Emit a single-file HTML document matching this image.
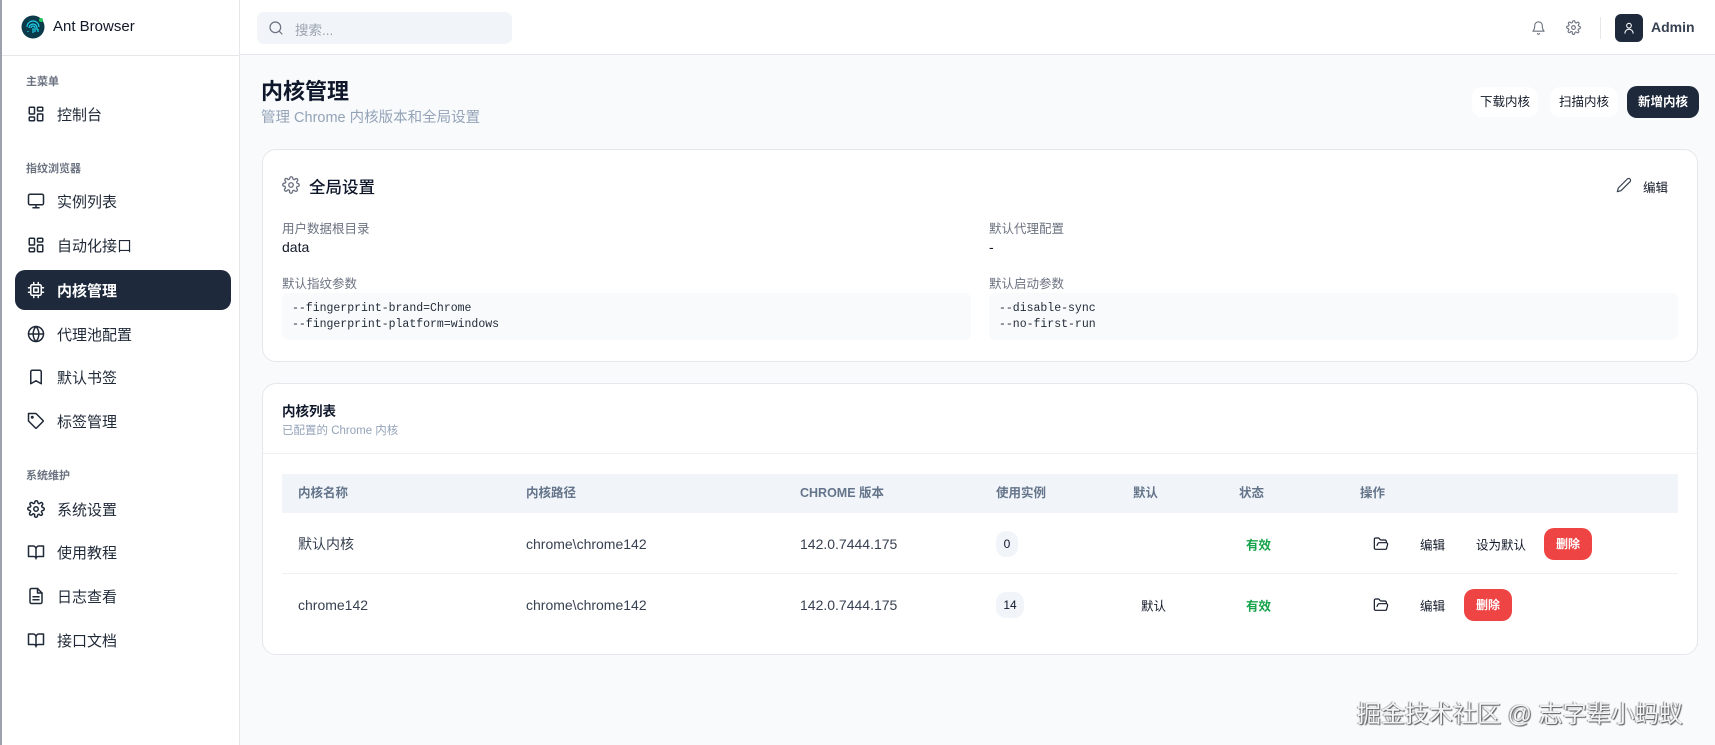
<!DOCTYPE html>
<html><head><meta charset="utf-8"><style>
*{box-sizing:border-box;margin:0;padding:0}
body{width:1715px;height:745px;overflow:hidden;font-family:"Liberation Sans","Noto Sans CJK SC",sans-serif;background:#f8fafc;color:#0f172a;position:relative;font-size:14px}
.abs{position:absolute}
.side{position:absolute;left:0;top:0;width:240px;height:745px;background:#fff;border-right:1px solid #e5e7eb;border-left:2px solid #9ca3af}
.top{position:absolute;left:240px;top:0;right:0;height:55px;background:#fff;border-bottom:1px solid #e5e7eb}
.sec{position:absolute;left:24px;font-size:11px;color:#6b7280;font-weight:bold}
.item{position:absolute;left:13px;width:216px;height:40px;display:flex;align-items:center;padding-left:12px;font-size:15px;color:#1f2937}
.item svg{width:18px;height:18px;margin-right:12px;fill:none;stroke:currentColor;stroke-width:2;stroke-linecap:round;stroke-linejoin:round}
.item.act{background:#1e293b;color:#fff;border-radius:10px;font-weight:bold}
.card{position:absolute;left:262px;width:1436px;background:#fff;border:1px solid #e5e7eb;border-radius:14px}
.lbl{position:absolute;font-size:12.5px;color:#6b7280}
.val{position:absolute;font-size:14px;color:#111827}
.code{position:absolute;background:#f8fafc;border-radius:6px;font-family:"Liberation Mono",monospace;font-size:11.5px;color:#1f2937;padding:8px 10px;line-height:16px}
.th{position:absolute;top:474px;height:39px;line-height:39px;font-size:12.5px;color:#64748b;font-weight:bold}
.td{position:absolute;font-size:14px;color:#374151;transform:translateY(-50%)}
.btnr{position:absolute;background:#ef4444;color:#fff;border-radius:10px;font-size:12px;font-weight:bold;text-align:center;line-height:32px;height:32px}
.pill{position:absolute;background:#f1f5f9;border-radius:10px;font-size:12px;text-align:center;height:26px;line-height:26px;transform:translateY(-50%)}
.ic{fill:none;stroke:currentColor;stroke-width:1.8;stroke-linecap:round;stroke-linejoin:round}
</style></head><body>
<div class="side">
 <svg class="abs" style="left:19px;top:15px" width="24" height="24" viewBox="0 0 24 24"><circle cx="12" cy="12" r="11.5" fill="#0b3a4a"/><g fill="none" stroke="#22d3ee" stroke-width="1.2"><path d="M6 12a6 6 0 0 1 12 0"/><path d="M8 13a4 4 0 0 1 8 0v2"/><path d="M10 13a2 2 0 0 1 4 0v4"/><path d="M12 13v5"/><path d="M7 16v1M17 14v3"/></g><circle cx="20" cy="5" r="2" fill="#22c55e"/></svg>
 <div class="abs" style="left:51px;top:18px;font-size:15px;font-weight:500;color:#111827">Ant Browser</div>
 <div class="abs" style="left:0;top:55px;width:238px;border-top:1px solid #e5e7eb"></div>
 <div class="sec" style="top:73px">主菜单</div>
 <div class="item" style="top:94px"><svg viewBox="0 0 24 24"><rect x="3" y="3" width="7" height="9" rx="1"/><rect x="14" y="3" width="7" height="5" rx="1"/><rect x="14" y="12" width="7" height="9" rx="1"/><rect x="3" y="16" width="7" height="5" rx="1"/></svg>控制台</div>
 <div class="sec" style="top:160px">指纹浏览器</div>
 <div class="item" style="top:181px"><svg viewBox="0 0 24 24"><rect x="2" y="3" width="20" height="14" rx="2"/><path d="M8 21h8M12 17v4"/></svg>实例列表</div>
 <div class="item" style="top:225px"><svg viewBox="0 0 24 24"><rect x="3" y="3" width="7" height="9" rx="1"/><rect x="14" y="3" width="7" height="5" rx="1"/><rect x="14" y="12" width="7" height="9" rx="1"/><rect x="3" y="16" width="7" height="5" rx="1"/></svg>自动化接口</div>
 <div class="item act" style="top:270px"><svg viewBox="0 0 24 24"><rect x="5" y="5" width="14" height="14" rx="2"/><rect x="9" y="9" width="6" height="6"/><path d="M9 2v3M15 2v3M9 19v3M15 19v3M2 9h3M2 15h3M19 9h3M19 15h3"/></svg>内核管理</div>
 <div class="item" style="top:314px"><svg viewBox="0 0 24 24"><circle cx="12" cy="12" r="10"/><path d="M2 12h20M12 2a15 15 0 0 1 0 20M12 2a15 15 0 0 0 0 20"/></svg>代理池配置</div>
 <div class="item" style="top:357px"><svg viewBox="0 0 24 24"><path d="M19 21l-7-4-7 4V5a2 2 0 0 1 2-2h10a2 2 0 0 1 2 2z"/></svg>默认书签</div>
 <div class="item" style="top:401px"><svg viewBox="0 0 24 24"><path d="M12 2H2v10l9.3 9.3a1 1 0 0 0 1.4 0l8.6-8.6a1 1 0 0 0 0-1.4z"/><circle cx="7" cy="7" r="1"/></svg>标签管理</div>
 <div class="sec" style="top:467px">系统维护</div>
 <div class="item" style="top:489px"><svg viewBox="0 0 24 24"><circle cx="12" cy="12" r="3"/><path d="M19.4 15a1.7 1.7 0 0 0 .3 1.8l.1.1a2 2 0 1 1-2.8 2.8l-.1-.1a1.7 1.7 0 0 0-2.9 1.2V21a2 2 0 1 1-4 0v-.1A1.7 1.7 0 0 0 7 19.3l-.1.1a2 2 0 1 1-2.8-2.8l.1-.1A1.7 1.7 0 0 0 3 13.6H3a2 2 0 1 1 0-4h.1A1.7 1.7 0 0 0 4.7 7l-.1-.1a2 2 0 1 1 2.8-2.8l.1.1A1.7 1.7 0 0 0 10.4 3V3a2 2 0 1 1 4 0v.1a1.7 1.7 0 0 0 2.9 1.2l.1-.1a2 2 0 1 1 2.8 2.8l-.1.1a1.7 1.7 0 0 0 1.2 2.9H21a2 2 0 1 1 0 4h-.1a1.7 1.7 0 0 0-1.5 1z"/></svg>系统设置</div>
 <div class="item" style="top:532px"><svg viewBox="0 0 24 24"><path d="M2 4h6a4 4 0 0 1 4 4v13a3 3 0 0 0-3-3H2zM22 4h-6a4 4 0 0 0-4 4v13a3 3 0 0 1 3-3h7z"/></svg>使用教程</div>
 <div class="item" style="top:576px"><svg viewBox="0 0 24 24"><path d="M14 2H6a2 2 0 0 0-2 2v16a2 2 0 0 0 2 2h12a2 2 0 0 0 2-2V8z"/><path d="M14 2v6h6M16 13H8M16 17H8"/></svg>日志查看</div>
 <div class="item" style="top:620px"><svg viewBox="0 0 24 24"><path d="M2 4h6a4 4 0 0 1 4 4v13a3 3 0 0 0-3-3H2zM22 4h-6a4 4 0 0 0-4 4v13a3 3 0 0 1 3-3h7z"/></svg>接口文档</div>
</div>
<div class="top">
 <div class="abs" style="left:17px;top:12px;width:255px;height:32px;background:#f1f5f9;border-radius:7px"></div>
 <svg class="abs ic" style="left:28px;top:20px;color:#6b7280" width="16" height="16" viewBox="0 0 24 24"><circle cx="11" cy="11" r="8"/><path d="M21 21l-4.3-4.3"/></svg>
 <div class="abs" style="left:55px;top:19px;font-size:13.5px;color:#9ca3af">搜索...</div>
 <svg class="abs ic" style="left:1291px;top:20px;color:#6b7280" width="15" height="16" viewBox="0 0 24 24"><path d="M6 8a6 6 0 0 1 12 0c0 7 3 9 3 9H3s3-2 3-9M10.3 21a1.9 1.9 0 0 0 3.4 0"/></svg>
 <svg class="abs ic" style="left:1326px;top:20px;color:#6b7280" width="15" height="15" viewBox="0 0 24 24"><circle cx="12" cy="12" r="3"/><path d="M19.4 15a1.7 1.7 0 0 0 .3 1.8l.1.1a2 2 0 1 1-2.8 2.8l-.1-.1a1.7 1.7 0 0 0-2.9 1.2V21a2 2 0 1 1-4 0v-.1A1.7 1.7 0 0 0 7 19.3l-.1.1a2 2 0 1 1-2.8-2.8l.1-.1A1.7 1.7 0 0 0 3 13.6H3a2 2 0 1 1 0-4h.1A1.7 1.7 0 0 0 4.7 7l-.1-.1a2 2 0 1 1 2.8-2.8l.1.1A1.7 1.7 0 0 0 10.4 3V3a2 2 0 1 1 4 0v.1a1.7 1.7 0 0 0 2.9 1.2l.1-.1a2 2 0 1 1 2.8 2.8l-.1.1a1.7 1.7 0 0 0 1.2 2.9H21a2 2 0 1 1 0 4h-.1a1.7 1.7 0 0 0-1.5 1z"/></svg>
 <div class="abs" style="left:1360px;top:17px;height:22px;border-left:1px solid #e5e7eb"></div>
 <div class="abs" style="left:1375px;top:14px;width:28px;height:28px;background:#1e293b;border-radius:6px"></div>
 <svg class="abs ic" style="left:1382px;top:21px;color:#fff" width="14" height="14" viewBox="0 0 24 24"><circle cx="12" cy="8" r="4"/><path d="M5 21a7 7 0 0 1 14 0"/></svg>
 <div class="abs" style="left:1411px;top:19px;font-size:14px;font-weight:bold;color:#374151">Admin</div>
</div>
<div class="abs" style="left:261px;top:74px;font-size:22px;font-weight:bold">内核管理</div>
<div class="abs" style="left:261px;top:106px;font-size:14.5px;color:#94a3b8">管理 Chrome 内核版本和全局设置</div>
<div class="abs" style="left:1472px;top:87px;width:66px;height:30px;line-height:30px;text-align:center;font-size:12.5px;background:#fff;border-radius:10px;color:#111827">下载内核</div>
<div class="abs" style="left:1550px;top:87px;width:68px;height:30px;line-height:30px;text-align:center;font-size:12.5px;background:#fff;border-radius:10px;color:#111827">扫描内核</div>
<div class="abs" style="left:1627px;top:86px;width:72px;height:32px;line-height:32px;text-align:center;font-size:12.5px;font-weight:bold;background:#1e293b;border-radius:10px;color:#fff">新增内核</div>

<div class="card" style="top:149px;height:213px"></div>
<svg class="abs ic" style="left:282px;top:176px;color:#6b7280" width="18" height="18" viewBox="0 0 24 24"><circle cx="12" cy="12" r="3"/><path d="M19.4 15a1.7 1.7 0 0 0 .3 1.8l.1.1a2 2 0 1 1-2.8 2.8l-.1-.1a1.7 1.7 0 0 0-2.9 1.2V21a2 2 0 1 1-4 0v-.1A1.7 1.7 0 0 0 7 19.3l-.1.1a2 2 0 1 1-2.8-2.8l.1-.1A1.7 1.7 0 0 0 3 13.6H3a2 2 0 1 1 0-4h.1A1.7 1.7 0 0 0 4.7 7l-.1-.1a2 2 0 1 1 2.8-2.8l.1.1A1.7 1.7 0 0 0 10.4 3V3a2 2 0 1 1 4 0v.1a1.7 1.7 0 0 0 2.9 1.2l.1-.1a2 2 0 1 1 2.8 2.8l-.1.1a1.7 1.7 0 0 0 1.2 2.9H21a2 2 0 1 1 0 4h-.1a1.7 1.7 0 0 0-1.5 1z"/></svg>
<div class="abs" style="left:309px;top:174px;font-size:16.5px;font-weight:500">全局设置</div>
<svg class="abs ic" style="left:1616px;top:177px;color:#374151" width="16" height="16" viewBox="0 0 24 24"><path d="M17 3a2.8 2.8 0 1 1 4 4L7.5 20.5 2 22l1.5-5.5z"/></svg>
<div class="abs" style="left:1643px;top:177px;font-size:12.5px;color:#111827">编辑</div>
<div class="lbl" style="left:282px;top:218px">用户数据根目录</div>
<div class="val" style="left:282px;top:239px">data</div>
<div class="lbl" style="left:282px;top:273px">默认指纹参数</div>
<div class="code" style="left:282px;top:293px;width:689px;height:47px">--fingerprint-brand=Chrome<br>--fingerprint-platform=windows</div>
<div class="lbl" style="left:989px;top:218px">默认代理配置</div>
<div class="val" style="left:989px;top:239px">-</div>
<div class="lbl" style="left:989px;top:273px">默认启动参数</div>
<div class="code" style="left:989px;top:293px;width:689px;height:47px">--disable-sync<br>--no-first-run</div>

<div class="card" style="top:383px;height:272px"></div>
<div class="abs" style="left:282px;top:400px;font-size:13.5px;font-weight:bold">内核列表</div>
<div class="abs" style="left:282px;top:422px;font-size:11.5px;color:#94a3b8">已配置的 Chrome 内核</div>
<div class="abs" style="left:263px;top:453px;width:1434px;border-top:1px solid #eef0f3"></div>
<div class="abs" style="left:282px;top:474px;width:1396px;height:39px;background:#f1f5f9"></div>
<div class="th" style="left:298px">内核名称</div>
<div class="th" style="left:526px">内核路径</div>
<div class="th" style="left:800px">CHROME 版本</div>
<div class="th" style="left:996px">使用实例</div>
<div class="th" style="left:1133px">默认</div>
<div class="th" style="left:1239px">状态</div>
<div class="th" style="left:1360px">操作</div>
<div class="abs" style="left:282px;top:573px;width:1396px;border-top:1px solid #eef0f3"></div>

<div class="td" style="left:298px;top:544px">默认内核</div>
<div class="td" style="left:526px;top:544px">chrome\chrome142</div>
<div class="td" style="left:800px;top:544px">142.0.7444.175</div>
<div class="pill" style="left:996px;top:544px;width:22px">0</div>
<div class="td" style="left:1246px;top:544px;color:#16a34a;font-size:12.5px;font-weight:bold">有效</div>
<svg class="abs ic" style="left:1373px;top:536px;color:#111827" width="16" height="16" viewBox="0 0 24 24"><path d="M6 14l1.5-3A2 2 0 0 1 9.2 10H20a2 2 0 0 1 1.9 2.5l-1.5 6A2 2 0 0 1 18.5 20H4a2 2 0 0 1-2-2V5a2 2 0 0 1 2-2h3.9a2 2 0 0 1 1.7.9l.8 1.2a2 2 0 0 0 1.7.9H18a2 2 0 0 1 2 2v2"/></svg>
<div class="td" style="left:1420px;top:544px;font-size:12.5px;color:#111827">编辑</div>
<div class="td" style="left:1476px;top:544px;font-size:12.5px;color:#111827">设为默认</div>
<div class="btnr" style="left:1544px;top:528px;width:48px">删除</div>

<div class="td" style="left:298px;top:605px">chrome142</div>
<div class="td" style="left:526px;top:605px">chrome\chrome142</div>
<div class="td" style="left:800px;top:605px">142.0.7444.175</div>
<div class="pill" style="left:996px;top:605px;width:28px">14</div>
<div class="td" style="left:1141px;top:605px;font-size:12.5px;color:#111827">默认</div>
<div class="td" style="left:1246px;top:605px;color:#16a34a;font-size:12.5px;font-weight:bold">有效</div>
<svg class="abs ic" style="left:1373px;top:597px;color:#111827" width="16" height="16" viewBox="0 0 24 24"><path d="M6 14l1.5-3A2 2 0 0 1 9.2 10H20a2 2 0 0 1 1.9 2.5l-1.5 6A2 2 0 0 1 18.5 20H4a2 2 0 0 1-2-2V5a2 2 0 0 1 2-2h3.9a2 2 0 0 1 1.7.9l.8 1.2a2 2 0 0 0 1.7.9H18a2 2 0 0 1 2 2v2"/></svg>
<div class="td" style="left:1420px;top:605px;font-size:12.5px;color:#111827">编辑</div>
<div class="btnr" style="left:1464px;top:589px;width:48px">删除</div>

<div class="abs" style="left:1357px;top:694px;font-size:24px;color:#f3f4f6;text-shadow:1px 1px 1px #555,-1px 0 1px #888;white-space:nowrap">掘金技术社区 @ 志字辈小蚂蚁</div>
</body></html>
